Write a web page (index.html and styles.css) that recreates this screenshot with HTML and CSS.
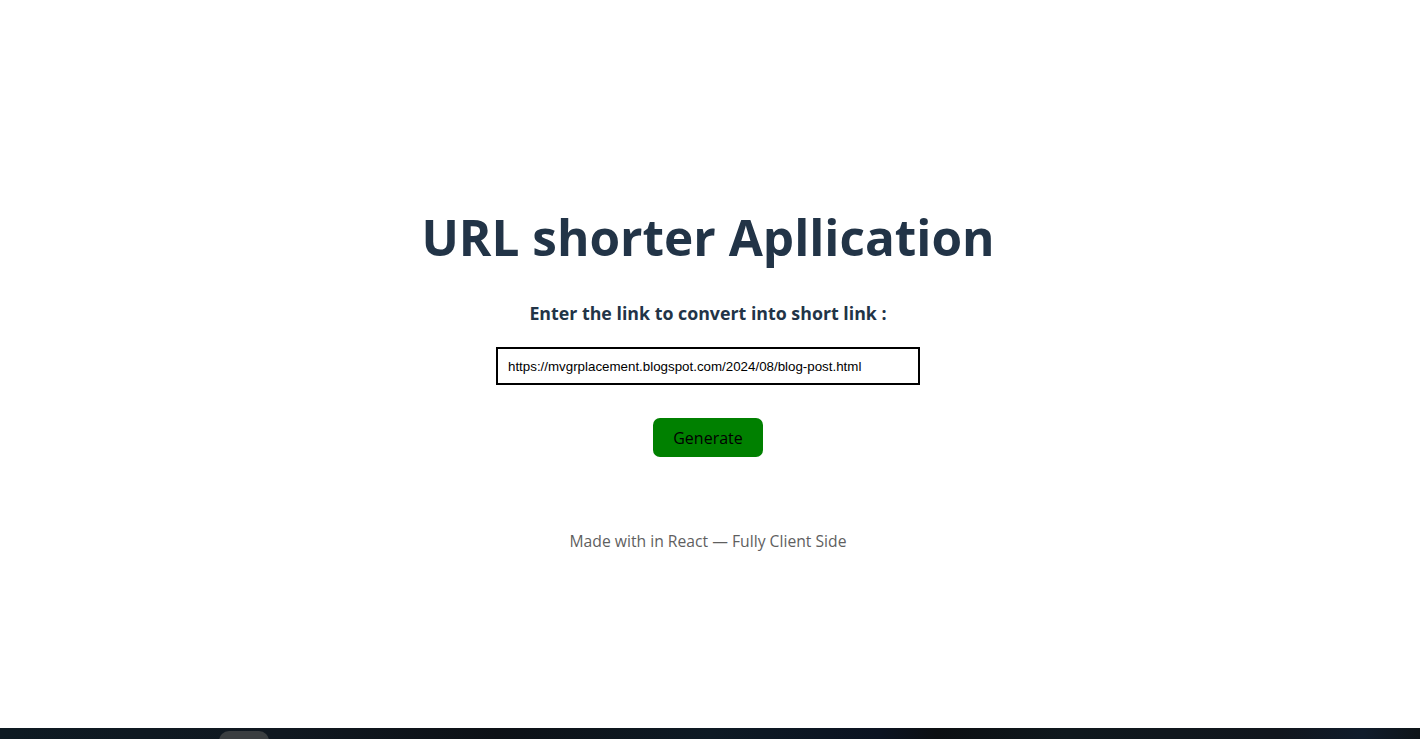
FILE: index.html
```html
<!DOCTYPE html>
<html>
<head>
<meta charset="utf-8">
<link rel="stylesheet" href="styles.css">
</head>
<body>
<main class="page">
  <section class="app">
    <h1 class="title">URL shorter Apllication</h1>
    <p class="label">Enter the link to convert into short link :</p>
    <input class="url-input" type="text" value="https://mvgrplacement.blogspot.com/2024/08/blog-post.html">
    <button class="generate">Generate</button>
    <p class="footer">Made with in React — Fully Client Side</p>
  </section>
</main>
<div class="taskbar"><span class="taskbar-pill"></span></div>
</body>
</html>
```
FILE: styles.css
```css
html, body {
  margin: 0;
  padding: 0;
  background: #ffffff;
}
body {
  width: 1420px;
  height: 739px;
  overflow: hidden;
  display: flex;
  flex-direction: column;
  font-family: "Open Sans", "Noto Sans", sans-serif;
}
.page {
  height: 728px;
  display: flex;
  justify-content: center;
  padding-right: 4px;
}
.app {
  display: flex;
  flex-direction: column;
  align-items: center;
  padding-top: 205px;
}
.title {
  margin: 0;
  font-size: 49.5px;
  line-height: 64px;
  font-weight: 700;
  color: #223447;
}
.label {
  margin: 32px 0 0;
  font-size: 17.8px;
  line-height: 24px;
  font-weight: 700;
  color: #223447;
}
.url-input {
  margin-top: 22px;
  box-sizing: border-box;
  width: 424px;
  height: 38px;
  border: 2px solid #000;
  padding: 0 10px;
  font-family: "Liberation Sans", Arial, sans-serif;
  font-size: 13.33px;
  color: #000;
  outline: none;
}
.generate {
  margin-top: 33px;
  width: 110px;
  height: 39px;
  border: none;
  border-radius: 7px;
  background: #008000;
  color: #000;
  font-family: "Open Sans", "Noto Sans", sans-serif;
  font-size: 16px;
  font-weight: 500;
  cursor: pointer;
}
.footer {
  margin: 73px 0 0;
  font-size: 15.7px;
  line-height: 22px;
  color: #5f5f5f;
}
.taskbar {
  height: 11px;
  background: linear-gradient(90deg, #0e1a22 0%, #101820 20%, #0d1116 35%, #0e1a24 50%, #0b1321 62%, #0c0f12 66%, #0f181d 75%, #11161d 90%, #101c2b 96%, #0e1418 100%);
  position: relative;
}
.taskbar-pill {
  position: absolute;
  left: 219px;
  top: 3px;
  width: 50px;
  height: 16px;
  border-radius: 10px 10px 0 0;
  background: #3a3e40;
}
```
